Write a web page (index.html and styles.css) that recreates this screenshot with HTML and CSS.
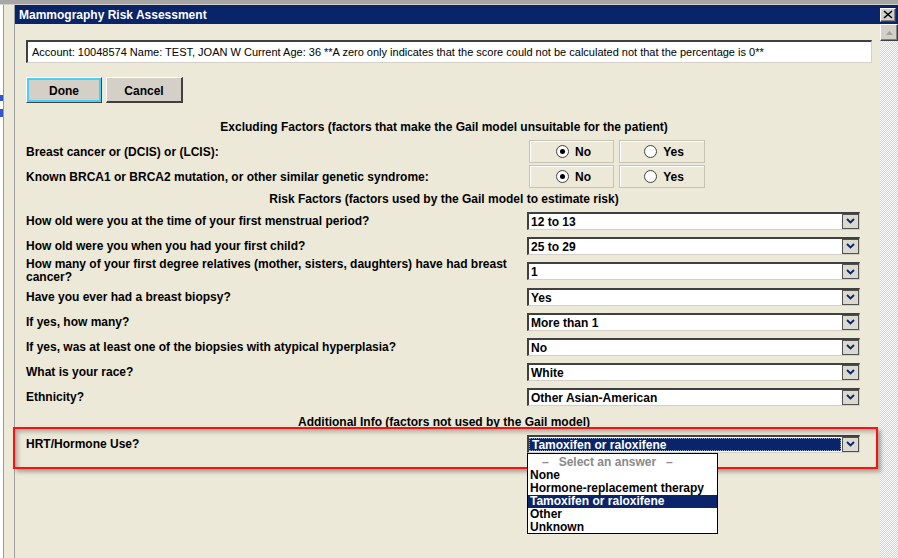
FILE: index.html
```html
<!DOCTYPE html>
<html>
<head>
<meta charset="utf-8">
<title>Mammography Risk Assessment</title>
<link rel="stylesheet" href="styles.css">
</head>
<body>
<div class="screen">
  <div class="back-title"></div>
  <div class="main">
    <div class="back-left">
      <div class="page"><span class="blue-mark m1"></span><span class="blue-mark m2"></span></div>
      <div class="frame"></div>
    </div>
    <div class="dialog">
      <div class="titlebar">
        <span class="title">Mammography Risk Assessment</span>
        <span class="close">
          <svg width="10" height="9" viewBox="0 0 10 9"><path d="M1 1 L9 8 M9 1 L1 8" stroke="#000" stroke-width="1.6" fill="none"/></svg>
        </span>
      </div>
      <div class="dbody">
        <div class="content">
          <div class="account">Account: 10048574 Name: TEST, JOAN W Current Age: 36 **A zero only indicates that the score could not be calculated not that the percentage is 0**</div>
          <div class="buttons">
            <button class="btn focus">Done</button>
            <button class="btn">Cancel</button>
          </div>

          <div class="hdr h1">Excluding Factors (factors that make the Gail model unsuitable for the patient)</div>
          <div class="rrow">
            <div class="label">Breast cancer or (DCIS) or (LCIS):</div>
            <div class="radios">
              <div class="rbox"><span class="radio on"></span><span>No</span></div>
              <div class="rbox"><span class="radio"></span><span>Yes</span></div>
            </div>
          </div>
          <div class="rrow r2">
            <div class="label">Known BRCA1 or BRCA2 mutation, or other similar genetic syndrome:</div>
            <div class="radios">
              <div class="rbox"><span class="radio on"></span><span>No</span></div>
              <div class="rbox"><span class="radio"></span><span>Yes</span></div>
            </div>
          </div>

          <div class="hdr h2">Risk Factors (factors used by the Gail model to estimate risk)</div>
          <div class="srow">
            <div class="label">How old were you at the time of your first menstrual period?</div>
            <div class="sel"><span class="val">12 to 13</span><span class="arrow"><svg width="9" height="6" viewBox="0 0 9 6"><path d="M1 1 L4.5 4.5 L8 1" stroke="#0a246a" stroke-width="1.8" fill="none"/></svg></span></div>
          </div>
          <div class="srow">
            <div class="label">How old were you when you had your first child?</div>
            <div class="sel"><span class="val">25 to 29</span><span class="arrow"><svg width="9" height="6" viewBox="0 0 9 6"><path d="M1 1 L4.5 4.5 L8 1" stroke="#0a246a" stroke-width="1.8" fill="none"/></svg></span></div>
          </div>
          <div class="srow tall">
            <div class="label two">How many of your first degree relatives (mother, sisters, daughters) have had breast<br>cancer?</div>
            <div class="sel"><span class="val">1</span><span class="arrow"><svg width="9" height="6" viewBox="0 0 9 6"><path d="M1 1 L4.5 4.5 L8 1" stroke="#0a246a" stroke-width="1.8" fill="none"/></svg></span></div>
          </div>
          <div class="srow">
            <div class="label">Have you ever had a breast biopsy?</div>
            <div class="sel"><span class="val">Yes</span><span class="arrow"><svg width="9" height="6" viewBox="0 0 9 6"><path d="M1 1 L4.5 4.5 L8 1" stroke="#0a246a" stroke-width="1.8" fill="none"/></svg></span></div>
          </div>
          <div class="srow">
            <div class="label">If yes, how many?</div>
            <div class="sel"><span class="val">More than 1</span><span class="arrow"><svg width="9" height="6" viewBox="0 0 9 6"><path d="M1 1 L4.5 4.5 L8 1" stroke="#0a246a" stroke-width="1.8" fill="none"/></svg></span></div>
          </div>
          <div class="srow">
            <div class="label">If yes, was at least one of the biopsies with atypical hyperplasia?</div>
            <div class="sel"><span class="val">No</span><span class="arrow"><svg width="9" height="6" viewBox="0 0 9 6"><path d="M1 1 L4.5 4.5 L8 1" stroke="#0a246a" stroke-width="1.8" fill="none"/></svg></span></div>
          </div>
          <div class="srow">
            <div class="label">What is your race?</div>
            <div class="sel"><span class="val">White</span><span class="arrow"><svg width="9" height="6" viewBox="0 0 9 6"><path d="M1 1 L4.5 4.5 L8 1" stroke="#0a246a" stroke-width="1.8" fill="none"/></svg></span></div>
          </div>
          <div class="srow">
            <div class="label">Ethnicity?</div>
            <div class="sel"><span class="val">Other Asian-American</span><span class="arrow"><svg width="9" height="6" viewBox="0 0 9 6"><path d="M1 1 L4.5 4.5 L8 1" stroke="#0a246a" stroke-width="1.8" fill="none"/></svg></span></div>
          </div>

          <div class="hdr h3">Additional Info (factors not used by the Gail model)</div>
          <div class="srow hrt">
            <div class="label">HRT/Hormone Use?</div>
            <div class="sel active"><span class="val">Tamoxifen or raloxifene</span><span class="arrow"><svg width="9" height="6" viewBox="0 0 9 6"><path d="M1 1 L4.5 4.5 L8 1" stroke="#0a246a" stroke-width="1.8" fill="none"/></svg></span></div>
          </div>
        </div>
        <div class="vscroll">
          <div class="sb-up"><svg width="7" height="4" viewBox="0 0 7 4"><path d="M0 4 L3.5 0 L7 4 Z" fill="#a0a0a0"/></svg></div>
          <div class="sb-track"></div>
        </div>
      </div>
    </div>
  </div>
</div>

<div class="highlight"></div>

<ul class="droplist">
  <li class="placeholder">–&nbsp;&nbsp;&nbsp;Select an answer&nbsp;&nbsp;&nbsp;–</li>
  <li>None</li>
  <li>Hormone-replacement therapy</li>
  <li class="picked">Tamoxifen or raloxifene</li>
  <li>Other</li>
  <li>Unknown</li>
</ul>
</body>
</html>
```

FILE: styles.css
```css
* { box-sizing: border-box; }
html, body { margin: 0; padding: 0; }
body {
  width: 898px;
  height: 558px;
  overflow: hidden;
  position: relative;
  background: #ece9d8;
  font-family: "Liberation Sans", Arial, sans-serif;
  font-size: 12px;
  color: #000;
}

.screen { display: flex; flex-direction: column; height: 558px; }

.back-title {
  height: 5px;
  background: #a6a6a6;
  border-bottom: 1px solid #d4d0c8;
}

.main { flex: 1; display: flex; }

.back-left { width: 15px; display: flex; }
.back-left .page {
  width: 4px;
  background: #fff;
  border-right: 1px solid #9a9a9a;
  position: relative;
}
.blue-mark { position: absolute; left: 0; width: 3px; background: #3355cc; }
.blue-mark.m1 { top: 90px; height: 6px; }
.blue-mark.m2 { top: 104px; height: 8px; }
.back-left .frame {
  flex: 1;
  background: #ece9d8;
  border-right: 1px solid #a0a0a0;
}

.dialog { flex: 1; display: flex; flex-direction: column; }

.titlebar {
  height: 19px;
  background: #0a246a;
  display: flex;
  align-items: center;
  padding-left: 4px;
  color: #fff;
  font-weight: bold;
  font-size: 12px;
}
.title { flex: 1; }
.close {
  width: 16px;
  height: 14px;
  margin-right: 2px;
  background: #d4d0c8;
  border-top: 1px solid #fff;
  border-left: 1px solid #fff;
  border-right: 1px solid #404040;
  border-bottom: 1px solid #404040;
  box-shadow: inset -1px -1px #808080;
  display: flex;
  align-items: center;
  justify-content: center;
}

.dbody { flex: 1; display: flex; }

.content {
  flex: 1;
  padding: 16px 0 0 11px;
}

.account {
  width: 846px;
  height: 23px;
  background: #fff;
  border-top: 2px solid #404040;
  border-left: 2px solid #404040;
  border-right: 1px solid #d4d0c8;
  border-bottom: 1px solid #d4d0c8;
  font-size: 11px;
  line-height: 20px;
  padding-left: 4px;
  white-space: nowrap;
  overflow: hidden;
}

.buttons { display: flex; gap: 4px; margin-top: 14px; }
.btn {
  width: 76px;
  height: 26px;
  padding: 2px 0 0 0;
  background: #d4d0c8;
  font-family: "Liberation Sans", Arial, sans-serif;
  font-weight: bold;
  font-size: 12px;
  color: #000;
  border-top: 1px solid #fff;
  border-left: 1px solid #fff;
  border-right: 2px solid #404040;
  border-bottom: 2px solid #404040;
}
.btn + .btn { width: 77px; }
.btn.focus {
  border-right: 1px solid #404040;
  border-bottom: 1px solid #404040;
  box-shadow: inset 0 0 0 2px #4ccdf5;
}

.hdr {
  height: 16px;
  line-height: 16px;
  font-weight: bold;
  text-align: center;
  width: 836px;
}
.h1 { margin-top: 16px; }
.h2 { margin-top: 3px; }
.h3 { margin-top: 5px; }

.label { font-weight: bold; width: 501px; line-height: 14px; }
.label.two { line-height: 13px; }

.rrow { display: flex; align-items: center; height: 23px; margin-top: 5px; }
.rrow.r2 { margin-top: 2px; }
.radios { display: flex; gap: 5px; margin-left: 2px; }
.rbox {
  height: 23px;
  width: 85px;
  border: 1px solid #c6c3b5;
  box-shadow: inset 1px 1px #fff;
  display: flex;
  align-items: center;
  justify-content: center;
  gap: 6px;
  font-weight: bold;
  padding-left: 4px;
}
.rbox + .rbox { width: 86px; }
.radio {
  width: 13px;
  height: 13px;
  border-radius: 50%;
  background: #fff;
  border: 1px solid #404040;
  display: flex;
  align-items: center;
  justify-content: center;
}
.radio.on::after {
  content: "";
  width: 5px;
  height: 5px;
  border-radius: 50%;
  background: #000;
}

.srow { display: flex; align-items: center; height: 25px; }
.h2 + .srow { margin-top: 1px; }
.srow.tall { height: 26px; }
.srow.hrt { margin-top: 1px; }

.sel {
  width: 333px;
  height: 18px;
  background: #fff;
  border-top: 2px solid #404040;
  border-left: 2px solid #404040;
  border-right: 1px solid #d4d0c8;
  border-bottom: 1px solid #d4d0c8;
  display: flex;
  align-items: stretch;
  font-weight: bold;
}
.sel .val {
  flex: 1;
  line-height: 16px;
  padding-left: 2px;
  margin: 0 1px 0 0;
}
.sel .arrow {
  width: 17px;
  background: #dcd9cf;
  border: 1px solid #505050;
  display: flex;
  align-items: center;
  justify-content: center;
}
.sel.active .val {
  background: #0a246a;
  color: #fff;
  margin: 1px 1px 1px 0;
  line-height: 13px;
  border: 1px dotted #8aa0d0;
}

.vscroll { width: 18px; display: flex; flex-direction: column; }
.sb-up {
  height: 17px;
  background: #d4d0c8;
  border-top: 1px solid #fff;
  border-left: 1px solid #fff;
  border-right: 1px solid #404040;
  border-bottom: 1px solid #404040;
  box-shadow: inset -1px -1px #808080;
  display: flex;
  align-items: center;
  justify-content: center;
}
.sb-track {
  flex: 1;
  background: repeating-conic-gradient(#ffffff 0 25%, #d4d0c8 0 50%) 0 0 / 2px 2px;
}

.highlight {
  position: absolute;
  left: 13px;
  top: 427px;
  width: 865px;
  height: 42px;
  border: 2px solid #ff1010;
  box-shadow: 3px 3px 4px rgba(0, 0, 0, 0.3), inset 3px 3px 4px rgba(0, 0, 0, 0.25);
}

.droplist {
  position: absolute;
  left: 527px;
  top: 453px;
  width: 191px;
  height: 81px;
  margin: 0;
  padding: 2px 0 0 0;
  list-style: none;
  background: #fff;
  border: 1px solid #000;
  font-weight: bold;
  font-size: 12px;
}
.droplist li {
  height: 13px;
  line-height: 13px;
  padding-left: 2px;
  white-space: nowrap;
}
.droplist li.placeholder { color: #8a8a8a; padding-left: 14px; }
.droplist li.picked { background: #0a246a; color: #fff; }
```
